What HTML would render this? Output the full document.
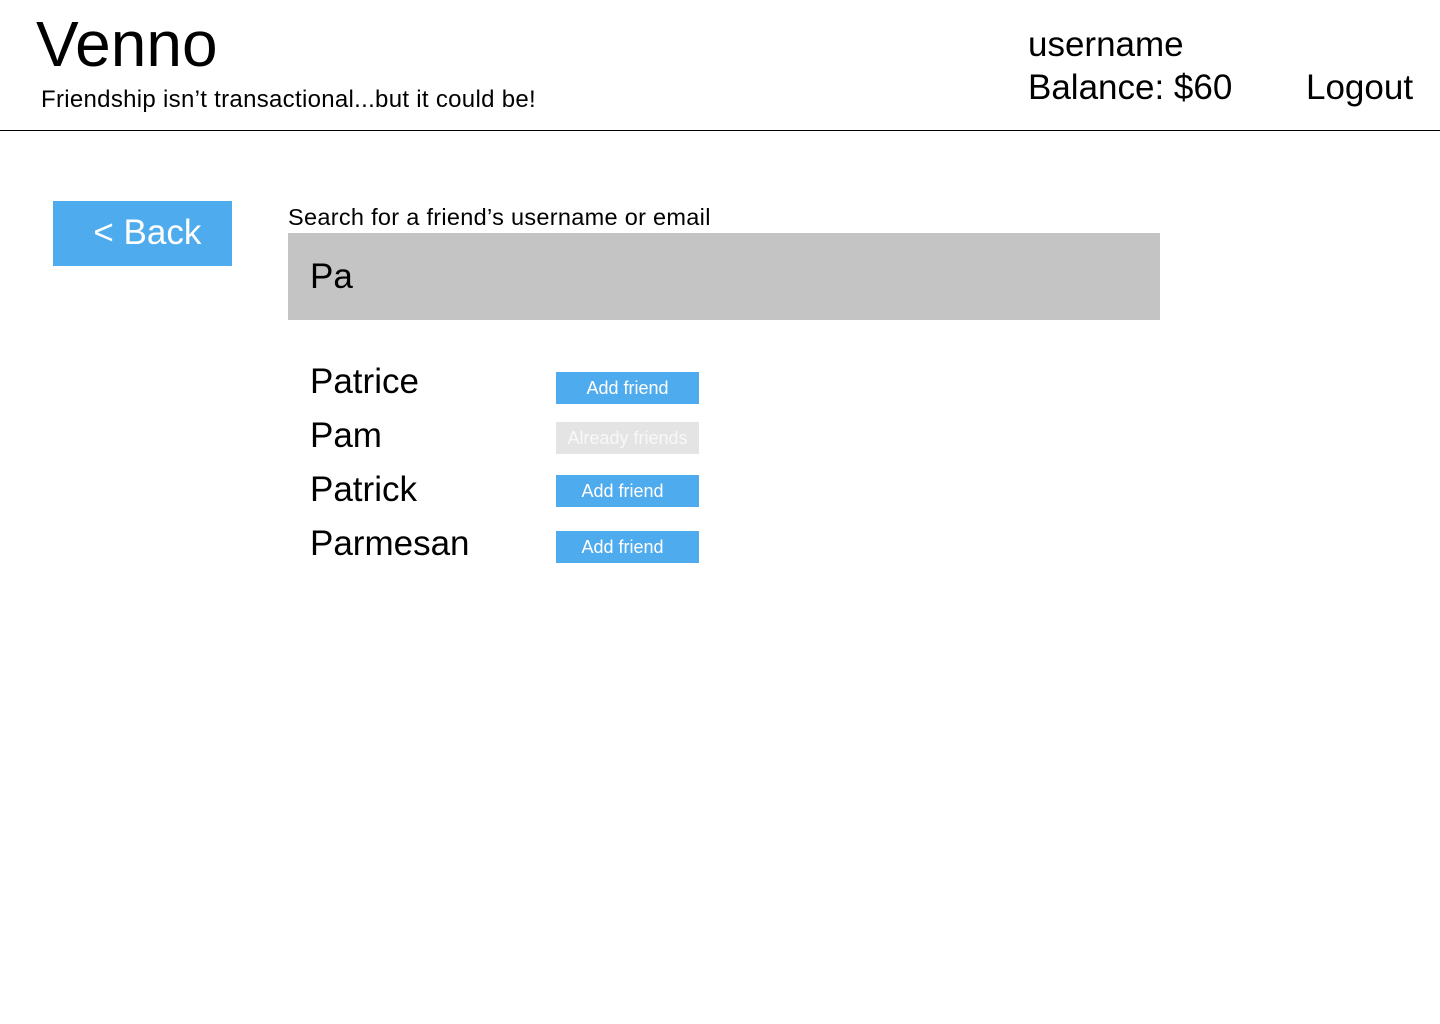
<!DOCTYPE html>
<html><head><meta charset="utf-8"><style>
body{margin:0;width:1440px;height:1024px;background:#fff;position:relative;overflow:hidden;font-family:"Liberation Sans",sans-serif;color:#000}
.a{position:absolute;line-height:1;white-space:nowrap}
.btn{position:absolute;left:556px;width:143px;height:32px;background:#4eabed;color:#fff;font-size:18px;line-height:32px;text-align:center}
</style></head><body>
<div class="a" style="left:36px;top:12px;font-size:64px">Venno</div>
<div class="a" style="left:41px;top:88px;font-size:24px;letter-spacing:0.3px">Friendship isn’t transactional...but it could be!</div>
<div class="a" style="left:1028px;top:27px;font-size:35px">username</div>
<div class="a" style="left:1028px;top:70px;font-size:35px">Balance: $60</div>
<div class="a" style="left:1306px;top:70px;font-size:35px">Logout</div>
<div style="position:absolute;left:0;top:130px;width:1440px;height:1px;background:#000"></div>
<div style="position:absolute;left:53px;top:201px;width:179px;height:65px;background:#4eabed;color:#fff;font-size:35px;line-height:63px;text-align:center">&nbsp;&lt; Back</div>
<div class="a" style="left:288px;top:206px;font-size:23.5px;letter-spacing:0.3px">Search for a friend’s username or email</div>
<div style="position:absolute;left:288px;top:233px;width:872px;height:87px;background:#c4c4c4"></div>
<div class="a" style="left:310px;top:259px;font-size:35px">Pa</div>
<div class="a" style="left:310px;top:364px;font-size:35px">Patrice</div>
<div class="a" style="left:310px;top:418px;font-size:35px">Pam</div>
<div class="a" style="left:310px;top:472px;font-size:35px">Patrick</div>
<div class="a" style="left:310px;top:526px;font-size:35px">Parmesan</div>
<div class="btn" style="top:372px">Add friend</div>
<div class="btn" style="top:422px;background:#e4e4e4;color:#f8f8f8">Already friends</div>
<div class="btn" style="top:475px">Add friend&nbsp;&nbsp;</div>
<div class="btn" style="top:531px">Add friend&nbsp;&nbsp;</div>
</body></html>
